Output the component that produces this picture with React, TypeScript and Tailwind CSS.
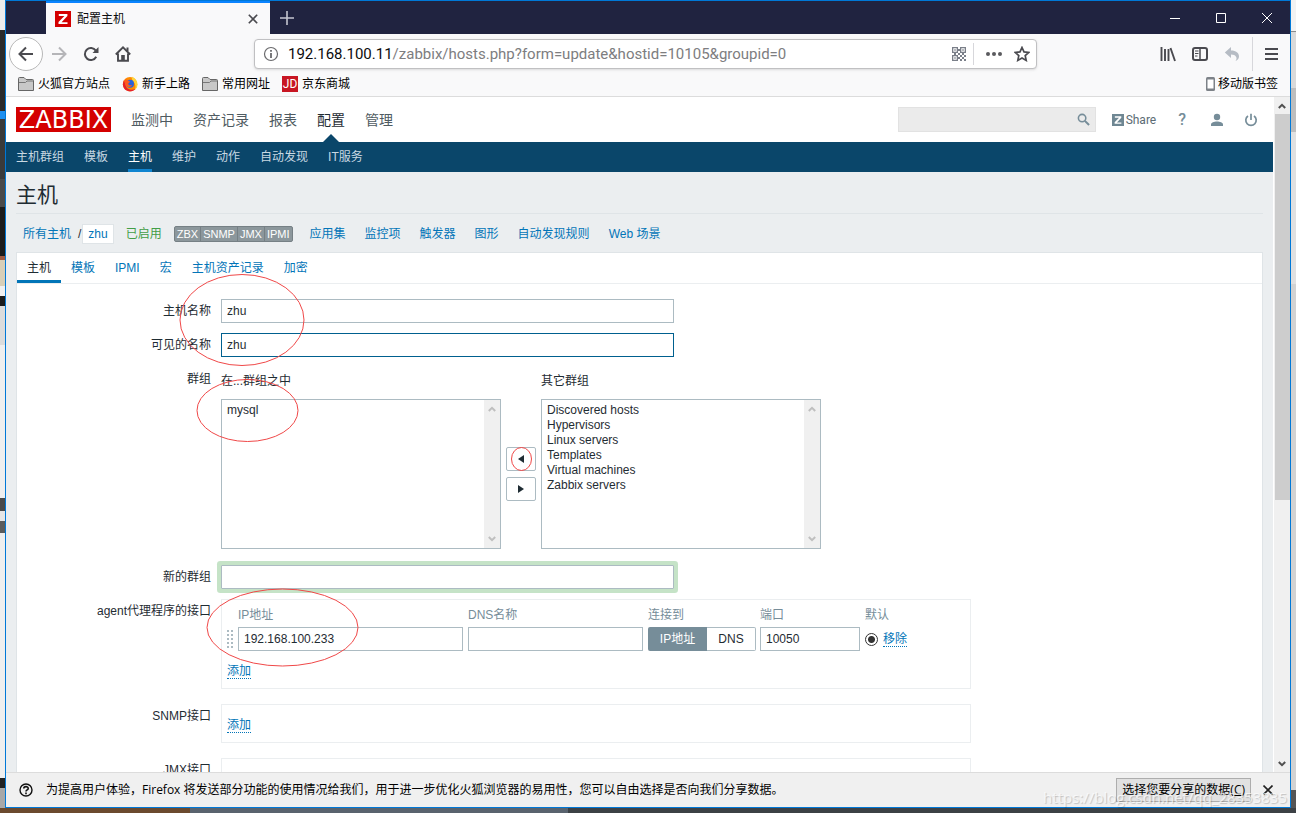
import { ReactNode, useState } from "react";

const mainMenu = ["监测中", "资产记录", "报表", "配置", "管理"];
const subMenu = ["主机群组", "模板", "主机", "维护", "动作", "自动发现", "IT服务"];
const hostLinks = ["应用集", "监控项", "触发器", "图形", "自动发现规则", "Web 场景"];
const availability = ["ZBX", "SNMP", "JMX", "IPMI"];
const tabs = ["主机", "模板", "IPMI", "宏", "主机资产记录", "加密"];
const otherGroups = [
  "Discovered hosts",
  "Hypervisors",
  "Linux servers",
  "Templates",
  "Virtual machines",
  "Zabbix servers",
];

// what shows of the desktop on either side of the window
const leftEdge = [
  "h-[30px] bg-[#ececec]",
  "h-[81px] bg-[#2b2b2b]",
  "h-2 bg-[#1e90f0]",
  "h-[60px] bg-[#3a3a3a]",
  "h-[28px] bg-[#4a4a4a]",
  "h-[49px] bg-[#1c1c1c]",
  "h-1 bg-[#a05a40]",
  "h-[26px] bg-[#d8cfb8]",
  "h-[10px] bg-[#f0f0f0]",
  "h-[10px] bg-[#1c1c1c]",
  "h-[39px] bg-[#dcdcdc]",
  "h-[153px] bg-[#efefef]",
  "h-[13px] bg-[#4a4a4a]",
  "h-[10px] bg-[#e6e6e6]",
  "h-3 bg-[#5c5c5c]",
  "grow bg-[#efefef]",
  "h-[10px] bg-[#222222]",
  "h-5 bg-[#a8a8a8]",
];
const rightEdge = [
  "h-[31px] bg-[#f2f2f2]",
  "h-px bg-[#8a8a8a]",
  "h-[56px] bg-[#d9d9d9]",
  "h-[44px] bg-[#bdbdbd]",
  "h-[152px] bg-[#e0e0e0]",
  "grow bg-[#d2d2d2]",
  "h-[18px] bg-[#555555]",
];

const inputClass =
  "h-6 border border-[#acbbc2] bg-white px-[5px] text-xs text-[#1f2c33] outline-none";

function DesktopEdge({ parts }: { parts: string[] }) {
  return (
    <div className="flex w-[5px] shrink-0 flex-col">
      {parts.map((part, index) => (
        <div key={index} className={part} />
      ))}
    </div>
  );
}

function ZIcon({ className }: { className: string }) {
  return (
    <svg viewBox="0 0 16 16" className={className} aria-hidden="true">
      <rect width="16" height="16" fill="currentColor" />
      <path d="M3.800 3h8.600v1.900L6.600 11.200h5.900V13H3.500v-1.900l5.900-6.200H3.800z" fill="#fff" />
    </svg>
  );
}

function FolderIcon() {
  return (
    <svg viewBox="0 0 16 14" className="h-[14px] w-4" aria-hidden="true">
      <path d="M.5 13.500V1.500q0-1 1-1H6l2 2h6.500q1 0 1 1v10z" fill="#c8c8c8" stroke="#666" />
      <path d="M1 5.500h6.500l1.500-1.500H15" fill="none" stroke="#777" />
    </svg>
  );
}

function FirefoxIcon() {
  return (
    <svg viewBox="0 0 16 16" className="size-4" aria-hidden="true">
      <circle cx="8" cy="8.200" r="7.200" fill="#ff8a00" />
      <path d="M2 4C.5 7 .5 11 3 13.500c3 2.600 8 2.400 10.500-.5C9 15 4 13 3.500 8.500z" fill="#e5202b" />
      <path d="M10 .8c3 1.200 5.500 4 5.500 7.700 0 2-1 4-2.500 5.200 1-3 .6-6-1.500-8C10 4.200 9.500 2.500 10 .8z" fill="#ffd43a" />
      <circle cx="8" cy="7.800" r="4" fill="#2a62d9" />
      <path d="M3 3.500c1.500 0 2.500.2 3.500 1.200L8 5.500C7.500 7 6 7 6.200 8c.5 1.600 2.500 1.600 4 .8-.7 2.200-4 3.200-6 1.200C2.500 8.200 2.400 5.500 3 3.500z" fill="#ff5a1f" />
    </svg>
  );
}

function Chevron({ up = false, className }: { up?: boolean; className: string }) {
  return (
    <svg viewBox="0 0 8 6" className={className} aria-hidden="true">
      <path
        d={up ? "M.8 5L4 1.800 7.200 5" : "M.8 1L4 4.200 7.200 1"}
        fill="none"
        stroke="currentColor"
        strokeWidth="2"
      />
    </svg>
  );
}

function TitleBar() {
  return (
    <div className="flex h-[33px] shrink-0 items-stretch bg-[#202340] pl-10">
      <div className="flex w-56 items-center border-t-2 border-[#0a84ff] bg-[#f9f9fa] px-[9px] text-xs text-[#0c0c0d]">
        <ZIcon className="size-4 text-[#d40000]" />
        <span className="ml-[6px]">配置主机</span>
        <button aria-label="关闭标签页" className="mr-[3px] ml-auto">
          <svg viewBox="0 0 10 10" className="size-[10px]">
            <path d="M.8.8l8.400 8.400M9.200.8L.8 9.200" stroke="#4a4a4f" strokeWidth="1.600" />
          </svg>
        </button>
      </div>
      <button aria-label="打开新标签页" className="px-[10px]">
        <svg viewBox="0 0 14 14" className="size-[14px]">
          <path d="M7 0v14M0 7h14" stroke="#c4c5cf" strokeWidth="1.600" />
        </svg>
      </button>
      <div className="ml-auto flex">
        <button aria-label="最小化" className="flex w-[46px] items-center justify-center">
          <svg viewBox="0 0 10 10" className="size-[10px]">
            <path d="M0 5.500h10" stroke="#fff" />
          </svg>
        </button>
        <button aria-label="最大化" className="flex w-[46px] items-center justify-center">
          <svg viewBox="0 0 10 10" className="size-[10px]">
            <path d="M.5.5h9v9h-9z" fill="none" stroke="#fff" />
          </svg>
        </button>
        <button aria-label="关闭" className="flex w-[46px] items-center justify-center">
          <svg viewBox="0 0 10 10" className="size-[10px]">
            <path d="M0 0l10 10M10 0L0 10" stroke="#fff" />
          </svg>
        </button>
      </div>
    </div>
  );
}

function Toolbar() {
  return (
    <div className="flex h-10 shrink-0 items-center bg-[#f9f9fa] text-[#4a4a4f]">
      <button
        aria-label="后退"
        className="ml-[3px] flex size-[34px] items-center justify-center rounded-full border border-[#b8b8b8] bg-white"
      >
        <svg viewBox="0 0 16 16" className="size-4">
          <path d="M15 8H1.500M8 1.500L1.500 8 8 14.500" fill="none" stroke="currentColor" strokeWidth="2" />
        </svg>
      </button>
      <button aria-label="前进" className="ml-2 text-[#b5b5b8]">
        <svg viewBox="0 0 16 16" className="size-4">
          <path d="M1 8h13.500M8 1.500L14.500 8 8 14.500" fill="none" stroke="currentColor" strokeWidth="2" />
        </svg>
      </button>
      <button aria-label="刷新" className="ml-4">
        <svg viewBox="0 0 16 16" className="size-4">
          <path d="M13.200 10.800A6 6 0 1 1 12.800 4.600" fill="none" stroke="currentColor" strokeWidth="2" />
          <path d="M15.500 1v6H9.500z" fill="currentColor" />
        </svg>
      </button>
      <button aria-label="主页" className="ml-4">
        <svg viewBox="0 0 16 16" className="size-4">
          <path
            d="M.8 8.500L8 1.400l7.200 7.100M3 7.500v7.300h10V7.500"
            fill="none"
            stroke="currentColor"
            strokeWidth="1.900"
          />
          <path d="M11.500 1.500h2v3.500h-2zM6.200 9h3.600v6H6.200z" fill="currentColor" />
        </svg>
      </button>
      <div className="ml-[123px] flex h-[30px] w-[783px] min-w-0 items-center rounded-sm border border-[#c0c0c2] bg-white pr-[6px] pl-2 shadow-sm">
        <svg viewBox="0 0 16 16" className="size-4 shrink-0" aria-hidden="true">
          <circle cx="8" cy="8" r="6.500" fill="none" stroke="#6a6a6d" strokeWidth="1.200" />
          <path d="M8 7v5M8 4v1.800" stroke="#6a6a6d" strokeWidth="1.800" />
        </svg>
        <div className="ml-[9px] grow font-[Roboto,sans-serif] text-[15px] whitespace-nowrap text-[#7d7d80]">
          <span className="text-[#0c0c0d]">192.168.100.11</span>
          /zabbix/hosts.php?form=update&amp;hostid=10105&amp;groupid=0
        </div>
        <button aria-label="二维码">
          <svg viewBox="0 0 14 14" className="size-[14px]" fill="#7a7f89">
            <path d="M0 0h6v6H0zM1.300 1.300v3.400h3.400V1.300z" fillRule="evenodd" />
            <path d="M8 0h6v6H8zM9.300 1.300v3.400h3.400V1.300z" fillRule="evenodd" />
            <path d="M0 8h6v6H0zM1.300 9.300v3.400h3.400V9.300z" fillRule="evenodd" />
            <path d="M2.300 2.300h1.400v1.400H2.300zM10.300 2.300h1.400v1.400h-1.400zM2.300 10.300h1.400v1.400H2.300zM6 2h2v2H6zM6 6h2v2H6zM2 6h2v2H2zM8 8h2v2H8zM12 8h2v2h-2zM10 10h2v2h-2zM8 12h2v2H8zM12 12h2v2h-2zM10 6h2v2h-2zM6 10h2v2H6z" />
          </svg>
        </button>
        <span className="mx-[7px] h-[22px] w-px bg-[#d7d7db]" />
        <button aria-label="页面操作" className="ml-[5px]">
          <svg viewBox="0 0 16 4" className="h-1 w-4" fill="#5a5a5e">
            <circle cx="2" cy="2" r="2" />
            <circle cx="8" cy="2" r="2" />
            <circle cx="14" cy="2" r="2" />
          </svg>
        </button>
        <button aria-label="为此页添加书签" className="ml-3">
          <svg viewBox="0 0 16 16" className="size-4">
            <path
              d="M8 1.500l2 4.400 4.800.5-3.600 3.200 1 4.800L8 12l-4.200 2.400 1-4.800L1.200 6.400 6 5.900z"
              fill="none"
              stroke="#4a4a4f"
              strokeWidth="1.700"
            />
          </svg>
        </button>
      </div>
      <div className="ml-auto flex items-center gap-4">
        <button aria-label="我的足迹">
          <svg viewBox="0 0 16 16" className="size-4">
            <path d="M1.500 1v14M5 3v12M8.500 3v12M10.500 2l4.500 13" stroke="currentColor" strokeWidth="1.900" />
          </svg>
        </button>
        <button aria-label="侧栏">
          <svg viewBox="0 0 16 16" className="size-4">
            <rect x="1" y="2" width="14" height="12" rx="2" fill="none" stroke="currentColor" strokeWidth="2" />
            <path d="M8 2v12" stroke="currentColor" strokeWidth="1.500" />
            <path d="M3 5h3.500M3 7.500h3.500M3 10h2.500" stroke="currentColor" />
          </svg>
        </button>
        <button aria-label="撤销">
          <svg viewBox="0 0 16 16" className="size-4" fill="#b6bcc4">
            <path d="M7 1v3.500c5 0 8 2.500 8 6 0 2-1.500 4-3.500 4.500C14 12 12 8.500 7 8.500V12L.8 6.500z" />
          </svg>
        </button>
      </div>
      <span className="ml-3 h-[34px] w-px bg-[#d7d7db]" />
      <button aria-label="打开菜单" className="mr-3 ml-3">
        <svg viewBox="0 0 13 12" className="h-3 w-[13px]">
          <path d="M0 1h13M0 6h13M0 11h13" stroke="currentColor" strokeWidth="2" />
        </svg>
      </button>
    </div>
  );
}

function Bookmark({ icon, children }: { icon: ReactNode; children: ReactNode }) {
  return (
    <a href="#" className="flex items-center gap-1">
      {icon}
      {children}
    </a>
  );
}

function BookmarksBar() {
  return (
    <div className="flex h-[23px] shrink-0 items-center gap-3 border-b border-[#dcdcdc] bg-[#f9f9fa] pr-3 pb-[2px] pl-3 text-xs text-black">
      <Bookmark icon={<FolderIcon />}>火狐官方站点</Bookmark>
      <Bookmark icon={<FirefoxIcon />}>新手上路</Bookmark>
      <Bookmark icon={<FolderIcon />}>常用网址</Bookmark>
      <Bookmark
        icon={
          <span className="flex size-4 items-center justify-center bg-[#c81623] font-[Roboto,sans-serif] text-xs leading-none text-white">
            JD
          </span>
        }
      >
        京东商城
      </Bookmark>
      <a href="#" className="ml-auto flex items-center gap-[3px]">
        <svg viewBox="0 0 9 14" className="h-[14px] w-[9px]" aria-hidden="true">
          <rect width="9" height="14" rx="1.500" fill="#7d8288" />
          <rect x="1.500" y="2.500" width="6" height="9" fill="#fff" />
        </svg>
        移动版书签
      </a>
    </div>
  );
}

function ZabbixHeader() {
  return (
    <header>
      <div className="flex h-[45px] items-center bg-white px-[10px]">
        <a
          href="#"
          className="flex h-[25px] w-[95px] items-center justify-center bg-[#d40000] font-['DejaVu_Sans',sans-serif] text-2xl leading-none text-white"
        >
          ZABBIX
        </a>
        <nav className="ml-5 flex h-full gap-5 text-sm text-[#4f5b62]">
          {mainMenu.map((item) => (
            <a
              key={item}
              href="#"
              className={
                item === "配置"
                  ? "relative flex items-center text-[#1f2c33]"
                  : "flex items-center"
              }
            >
              {item}
              {item === "配置" && (
                <span className="absolute bottom-0 left-1/2 -translate-x-1/2 border-x-8 border-b-8 border-x-transparent border-b-[#0a466a]" />
              )}
            </a>
          ))}
        </nav>
        <div className="ml-auto flex items-center text-[#768d99]">
          <div className="flex h-[25px] w-[198px] items-center border border-[#e2e2e2] bg-[#ebebeb] pr-[5px]">
            <input aria-label="搜索" className="min-w-0 grow bg-transparent px-1 text-xs outline-none" />
            <button aria-label="搜索">
              <svg viewBox="0 0 14 14" className="size-[13px]">
                <circle cx="5.500" cy="5.500" r="4" fill="none" stroke="currentColor" strokeWidth="1.700" />
                <path d="M8.500 8.500L13 13" stroke="currentColor" strokeWidth="2.200" />
              </svg>
            </button>
          </div>
          <a href="#" className="ml-4 flex items-center gap-[2px] text-[#5b6b74]">
            <ZIcon className="size-3 text-[#6f8793]" />
            <span className="font-[Roboto,sans-serif] text-xs">Share</span>
          </a>
          <a href="#" className="ml-[22px] font-[Roboto,sans-serif] text-base font-medium">
            ?
          </a>
          <a href="#" aria-label="用户" className="ml-6">
            <svg viewBox="0 0 14 14" className="size-[14px]" fill="currentColor">
              <circle cx="7" cy="4" r="3.200" />
              <path d="M1 13v-1.500C1 9.500 4 8.500 7 8.500s6 1 6 3V13z" />
            </svg>
          </a>
          <a href="#" aria-label="退出" className="mr-[5px] ml-5">
            <svg viewBox="0 0 14 14" className="size-[14px]">
              <path d="M4 3a5.200 5.200 0 1 0 6 0M7 .8V7" fill="none" stroke="currentColor" strokeWidth="1.700" />
            </svg>
          </a>
        </div>
      </div>
      <nav className="flex h-[30px] gap-5 bg-[#0a466a] px-[10px] text-xs text-[#c8d8e2]">
        {subMenu.map((item) => (
          <a
            key={item}
            href="#"
            className={
              item === "主机"
                ? "flex items-center border-b-[3px] border-[#0f84d0] pt-[3px] text-white"
                : "flex items-center"
            }
          >
            {item}
          </a>
        ))}
      </nav>
    </header>
  );
}

function HostNavigation() {
  return (
    <div className="flex h-[38px] items-center pt-px pl-[7px] text-xs text-[#0275b8]">
      <a href="#">所有主机</a>
      <span className="ml-[7px] text-[#1f2c33]">/</span>
      <a href="#" className="ml-px flex h-5 items-center border border-[#dfe4e7] bg-white px-[5px]">
        zhu
      </a>
      <span className="ml-3 text-[#429e47]">已启用</span>
      <span className="mr-[17px] ml-3 flex h-4 divide-x divide-[#768085] rounded-xs border border-[#768085] bg-[#8c979c] text-[11px] leading-[15px] text-white">
        {availability.map((item) => (
          <span key={item} className="px-[2px]">
            {item}
          </span>
        ))}
      </span>
      <div className="flex gap-[19px]">
        {hostLinks.map((item) => (
          <a key={item} href="#">
            {item}
          </a>
        ))}
      </div>
    </div>
  );
}

function FormRow({ label, htmlFor, children }: { label: string; htmlFor?: string; children: ReactNode }) {
  return (
    <div className="flex gap-[10px]">
      <label htmlFor={htmlFor} className="w-[194px] shrink-0 text-right leading-6">
        {label}
      </label>
      {children}
    </div>
  );
}

function GroupList({ id, label, options }: { id: string; label: string; options: string[] }) {
  return (
    <div className="w-[280px]">
      <label htmlFor={id} className="block leading-7">
        {label}
      </label>
      <div className="mt-1 flex h-[150px] border border-[#acbbc2] bg-white">
        <select id={id} multiple className="min-w-0 grow overflow-hidden pt-[3px] outline-none">
          {options.map((option) => (
            <option key={option} className="h-[15px] px-[5px] py-0">
              {option}
            </option>
          ))}
        </select>
        <div className="flex w-4 flex-col items-center justify-between bg-[#f0f0f0] py-[6px] text-[#bfbfbf]">
          <Chevron up className="h-[6px] w-2" />
          <Chevron className="h-[6px] w-2" />
        </div>
      </div>
    </div>
  );
}

function AddLink({ children }: { children: ReactNode }) {
  return (
    <a href="#" className="border-b border-dotted border-[#0275b8] leading-[14px] text-[#0275b8]">
      {children}
    </a>
  );
}

function InterfaceBox({ children }: { children?: ReactNode }) {
  return <div className="mb-[15px] w-[750px] border border-[#ebeef0] px-[5px]">{children}</div>;
}

function AgentTable() {
  const [connectTo, setConnectTo] = useState("ip");

  return (
    <table className="border-collapse text-left">
      <thead>
        <tr className="h-[27px] text-[#768d99]">
          <th className="w-[11px] p-0" />
          <th className="w-[230px] p-0 pt-[3px] font-normal">IP地址</th>
          <th className="w-[180px] p-0 pt-[3px] font-normal">DNS名称</th>
          <th className="w-28 p-0 pt-[3px] font-normal">连接到</th>
          <th className="w-[105px] p-0 pt-[3px] font-normal">端口</th>
          <th className="p-0 pt-[3px] font-normal">默认</th>
        </tr>
      </thead>
      <tbody>
        <tr>
          <td className="p-0">
            <svg viewBox="0 0 6 18" className="h-[18px] w-[6px]" fill="#acbbc2" aria-hidden="true">
              <path d="M0 0h2v2H0zM4 0h2v2H4zM0 4h2v2H0zM4 4h2v2H4zM0 8h2v2H0zM4 8h2v2H4zM0 12h2v2H0zM4 12h2v2H4zM0 16h2v2H0zM4 16h2v2H4z" />
            </svg>
          </td>
          <td className="p-0">
            <input aria-label="IP地址" defaultValue="192.168.100.233" className={`${inputClass} block w-[225px]`} />
          </td>
          <td className="p-0">
            <input aria-label="DNS名称" className={`${inputClass} block w-[175px]`} />
          </td>
          <td className="p-0">
            <div className="flex h-6 w-[108px]">
              <button
                onClick={() => setConnectTo("ip")}
                className={
                  connectTo === "ip"
                    ? "w-[59px] rounded-l-xs bg-[#768d99] text-white"
                    : "w-[59px] rounded-l-xs border border-[#acbbc2] bg-white"
                }
              >
                IP地址
              </button>
              <button
                onClick={() => setConnectTo("dns")}
                className={
                  connectTo === "dns"
                    ? "grow rounded-r-xs bg-[#768d99] text-white"
                    : "grow rounded-r-xs border border-l-0 border-[#acbbc2] bg-white"
                }
              >
                DNS
              </button>
            </div>
          </td>
          <td className="p-0">
            <input aria-label="端口" defaultValue="10050" className={`${inputClass} block w-[100px]`} />
          </td>
          <td className="p-0">
            <div className="flex items-center gap-[5px]">
              <input
                type="radio"
                name="default-interface"
                aria-label="默认"
                defaultChecked
                className="size-[13px] appearance-none rounded-full border border-[#333] bg-white bg-[radial-gradient(circle,#333_0,#333_3px,transparent_4px)]"
              />
              <AddLink>移除</AddLink>
            </div>
          </td>
        </tr>
      </tbody>
    </table>
  );
}

function HostForm() {
  return (
    <form className="flex flex-col gap-[10px] pt-[15px]" onSubmit={(e) => e.preventDefault()}>
      <FormRow label="主机名称" htmlFor="host">
        <input id="host" defaultValue="zhu" className={`${inputClass} w-[453px]`} />
      </FormRow>
      <FormRow label="可见的名称" htmlFor="visible-name">
        <input
          id="visible-name"
          defaultValue="zhu"
          className="h-6 w-[453px] border border-[#00608f] bg-white px-[5px] text-xs text-[#1f2c33] outline-none"
        />
      </FormRow>
      <FormRow label="群组" htmlFor="groups">
        <GroupList id="groups" label="在...群组之中" options={["mysql"]} />
        <div className="-mx-[5px] flex flex-col gap-[6px] pt-20">
          <button
            aria-label="添加到群组"
            className="flex h-6 w-[30px] items-center justify-center rounded-xs border border-[#acbbc2]"
          >
            <svg viewBox="0 0 6 8" className="h-2 w-[6px]">
              <path d="M6 0v8L0 4z" fill="#1f2c33" />
            </svg>
          </button>
          <button
            aria-label="从群组移除"
            className="flex h-6 w-[30px] items-center justify-center rounded-xs border border-[#acbbc2]"
          >
            <svg viewBox="0 0 6 8" className="h-2 w-[6px]">
              <path d="M0 0v8l6-4z" fill="#1f2c33" />
            </svg>
          </button>
        </div>
        <GroupList id="other-groups" label="其它群组" options={otherGroups} />
      </FormRow>
      <div className="pt-[6px]">
        <FormRow label="新的群组" htmlFor="new-group">
          <input id="new-group" className={`${inputClass} w-[453px] rounded-[1px] ring-4 ring-[#c5e3c7]`} />
        </FormRow>
      </div>
      <div>
        <FormRow label="agent代理程序的接口">
          <InterfaceBox>
            <AgentTable />
            <div className="pt-3 pb-[9px]">
              <AddLink>添加</AddLink>
            </div>
          </InterfaceBox>
        </FormRow>
        <FormRow label="SNMP接口">
          <InterfaceBox>
            <div className="pt-3 pb-[9px]">
              <AddLink>添加</AddLink>
            </div>
          </InterfaceBox>
        </FormRow>
        <FormRow label="JMX接口">
          <InterfaceBox>
            <div className="pt-3 pb-[9px]">
              <AddLink>添加</AddLink>
            </div>
          </InterfaceBox>
        </FormRow>
      </div>
    </form>
  );
}

// hand-drawn marks over the form
function Annotations() {
  return (
    <svg
      className="pointer-events-none absolute top-0 left-0 h-[676px] w-[1267px]"
      fill="none"
      stroke="#f04848"
      aria-hidden="true"
    >
      <ellipse cx="236" cy="223" rx="62" ry="45.500" />
      <ellipse cx="241.500" cy="313.500" rx="50.500" ry="31" />
      <ellipse cx="276.500" cy="530.500" rx="75.500" ry="38.500" />
      <ellipse cx="515.500" cy="362" rx="10" ry="11.500" />
    </svg>
  );
}

function ZabbixPage() {
  return (
    <div className="relative min-w-0 grow overflow-hidden bg-[#ebeef0] font-['Liberation_Sans','Noto_Sans_CJK_SC',sans-serif] text-xs text-[#1f2c33]">
      <ZabbixHeader />
      <main className="px-[10px]">
        <h1 className="flex h-[42px] items-center border-b border-[#dfe4e7] pt-1 text-[21px]">主机</h1>
        <HostNavigation />
        <div className="border border-[#dfe4e7] bg-white">
          <nav className="flex h-[31px] border-b border-[#ebeef0] text-[#0275b8]">
            {tabs.map((tab) => (
              <a
                key={tab}
                href="#"
                className={
                  tab === "主机"
                    ? "flex items-center border-b-[3px] border-[#0275b8] px-[10px] pt-[3px] text-[#1f2c33]"
                    : "flex items-center px-[10px]"
                }
              >
                {tab}
              </a>
            ))}
          </nav>
          <HostForm />
        </div>
      </main>
      <Annotations />
    </div>
  );
}

function Scrollbar() {
  return (
    <div className="flex w-[17px] shrink-0 flex-col items-center border-l border-white bg-[#f0f0f0] text-[#505050]">
      <div className="flex h-[17px] shrink-0 items-center">
        <Chevron up className="h-[6px] w-2" />
      </div>
      <div className="h-[386px] w-[15px] shrink-0 bg-[#cdcdcd]" />
      <div className="mt-auto flex h-[17px] shrink-0 items-center">
        <Chevron className="h-[6px] w-2" />
      </div>
    </div>
  );
}

function NotificationBar() {
  return (
    <div className="relative flex h-[35px] shrink-0 items-center border-t border-[#dcdcdc] bg-[#f0f0f0] pr-[17px] pl-[13px] text-xs text-black">
      <svg viewBox="0 0 14 14" className="size-[14px]" fill="none" aria-hidden="true">
        <circle cx="7" cy="7" r="6" stroke="#111" strokeWidth="1.400" />
        <path d="M4.800 5.600C4.800 3 9.200 3 9.200 5.400 9.200 7 7 6.800 7 8.600M7 9.600v1.600" stroke="#111" strokeWidth="1.600" />
      </svg>
      <p className="ml-[13px] whitespace-nowrap">
        为提高用户体验，Firefox 将发送部分功能的使用情况给我们，用于进一步优化火狐浏览器的易用性，您可以自由选择是否向我们分享数据。
      </p>
      <button className="ml-auto h-6 border border-[#adadad] bg-[#e1e1e1] px-[5px] whitespace-nowrap">
        选择您要分享的数据(<u>C</u>)
      </button>
      <button aria-label="关闭提示" className="ml-3">
        <svg viewBox="0 0 10 10" className="size-[10px]">
          <path d="M.5.5l9 9M9.500.5l-9 9" stroke="#222" strokeWidth="1.600" />
        </svg>
      </button>
      <span className="pointer-events-none absolute right-[3px] bottom-0 text-[15px] text-white/70 [text-shadow:1px_1px_1px_rgba(0,0,0,0.2)]">
        https://blog.csdn.net/qq_28353835
      </span>
    </div>
  );
}

export default function App() {
  return (
    <div className="flex h-screen flex-col overflow-hidden font-['Open_Sans','Noto_Sans_CJK_SC',sans-serif]">
      <div className="flex min-h-0 grow">
        <DesktopEdge parts={leftEdge} />
        <div className="flex min-w-0 grow flex-col border border-[#0078d7]">
          <TitleBar />
          <Toolbar />
          <BookmarksBar />
          <div className="flex min-h-0 grow">
            <ZabbixPage />
            <Scrollbar />
          </div>
          <NotificationBar />
        </div>
        <DesktopEdge parts={rightEdge} />
      </div>
      <div className="flex h-[5px] shrink-0">
        <div className="w-[190px] bg-[#6b4a2e]" />
        <div className="w-[378px] bg-[#59636e]" />
        <div className="grow bg-[#3c4145]" />
      </div>
    </div>
  );
}
